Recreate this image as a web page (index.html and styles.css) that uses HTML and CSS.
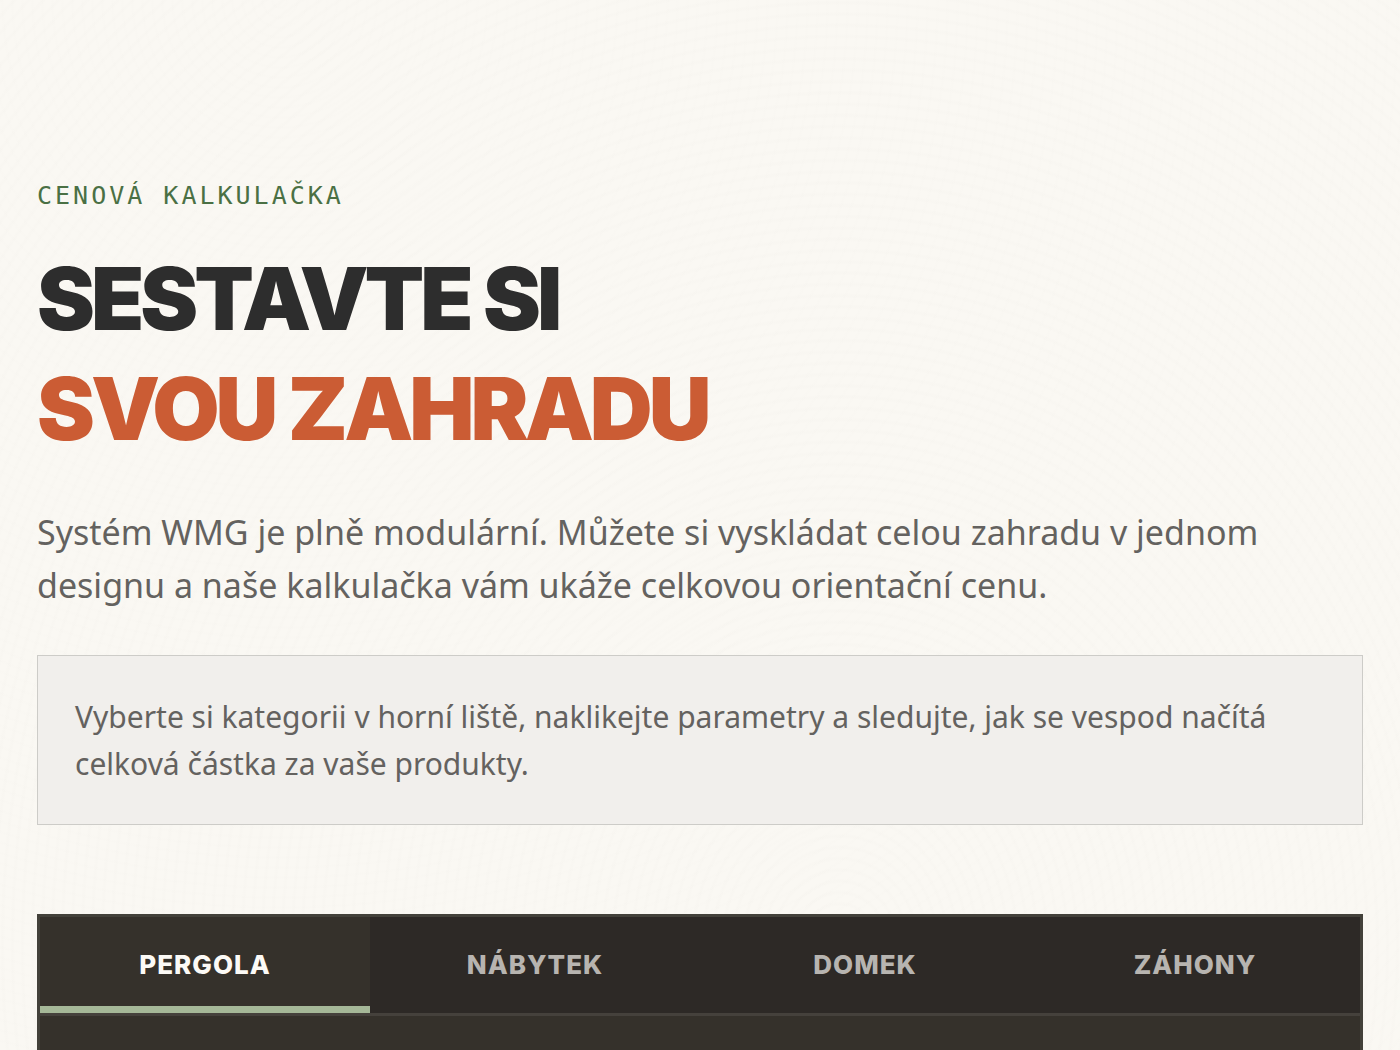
FILE: index.html
```html
<!DOCTYPE html>
<html lang="cs">
  <head>
    <meta charset="UTF-8" />
    <meta name="viewport" content="width=device-width, initial-scale=1.0" />
    <title>Cenová kalkulačka</title>
    <link rel="stylesheet" href="styles.css">
  </head>
  <body>
    <main class="calculator">
      <header class="intro">
        <p class="intro__label">CENOVÁ KALKULAČKA</p>
        <h1 class="intro__title">
          SESTAVTE SI
          <span class="intro__accent">SVOU ZAHRADU</span>
        </h1>
        <p class="intro__text">
          Systém WMG je plně modulární. Můžete si vyskládat celou zahradu v
          jednom designu a naše kalkulačka vám ukáže celkovou orientační cenu.
        </p>
        <p class="intro__note">
          Vyberte si kategorii v horní liště, naklikejte parametry a sledujte,
          jak se vespod načítá celková částka za vaše produkty.
        </p>
      </header>

      <section class="panel">
        <div class="tabs" role="tablist">
          <button class="tab tab--active" type="button" role="tab" aria-selected="true">PERGOLA</button>
          <button class="tab" type="button" role="tab" aria-selected="false">NÁBYTEK</button>
          <button class="tab" type="button" role="tab" aria-selected="false">DOMEK</button>
          <button class="tab" type="button" role="tab" aria-selected="false">ZÁHONY</button>
        </div>
        <div class="panel__body" role="tabpanel"></div>
      </section>
    </main>

    <script>
      const tabs = document.querySelectorAll(".tab");

      tabs.forEach((tab) => {
        tab.addEventListener("click", () => {
          tabs.forEach((item) => {
            item.classList.toggle("tab--active", item === tab);
            item.setAttribute("aria-selected", item === tab);
          });
        });
      });
    </script>
  </body>
</html>
```
FILE: styles.css
```css
* {
  padding: 0;
  margin: 0;
  box-sizing: border-box;
}

body {
  min-height: 100vh;
  overflow-x: hidden;
  background-color: #faf8f3;
  /* faint contour lines */
  background-image:
    repeating-radial-gradient(ellipse at 60% 90%, transparent 0 5px, rgba(70, 60, 50, 0.009) 7px 8px, transparent 10px),
    repeating-radial-gradient(circle at 20% 0%, transparent 0 5px, rgba(70, 60, 50, 0.005) 7px 8px, transparent 10px);
  font-family: "Noto Sans", sans-serif;
  color: #2d2d2d;
}

.calculator {
  padding: 176px 37px 0;
}

.intro__label {
  font-family: "DejaVu Sans Mono", monospace;
  font-size: 25px;
  line-height: 40px;
  letter-spacing: 3px;
  color: #4a7044;
}

.intro__title {
  margin-top: 28px;
  font-family: "Inter", sans-serif;
  font-size: 87px;
  font-weight: 900;
  line-height: 110px;
  letter-spacing: -4px;
}

.intro__accent {
  display: block;
  color: #cb5c34;
}

.intro__text {
  margin-top: 42px;
  font-size: 34px;
  line-height: 53px;
  color: #64625f;
}

.intro__note {
  margin-top: 43px;
  padding: 37px;
  border: 1px solid #cdccc8;
  background-color: #f1efec;
  font-size: 30px;
  line-height: 47px;
  color: #64625f;
}

.panel {
  margin-top: 89px;
  border: 3px solid #43413a;
  border-bottom: 0;
  background-color: #35312b;
}

.tabs {
  display: grid;
  grid-template-columns: repeat(4, 1fr);
  border-bottom: 3px solid #45413c;
}

.tab {
  padding: 28px 16px;
  border: 0;
  background-color: #2d2926;
  font-family: "Inter", sans-serif;
  font-size: 26px;
  font-weight: 800;
  line-height: 40px;
  letter-spacing: 1px;
  color: #b7b4b0;
  cursor: pointer;
}

.tab--active {
  background-color: #35312b;
  box-shadow: inset 0 -7px #a5b898;
  color: #fcfaf6;
}

.panel__body {
  min-height: 35px;
}
```
